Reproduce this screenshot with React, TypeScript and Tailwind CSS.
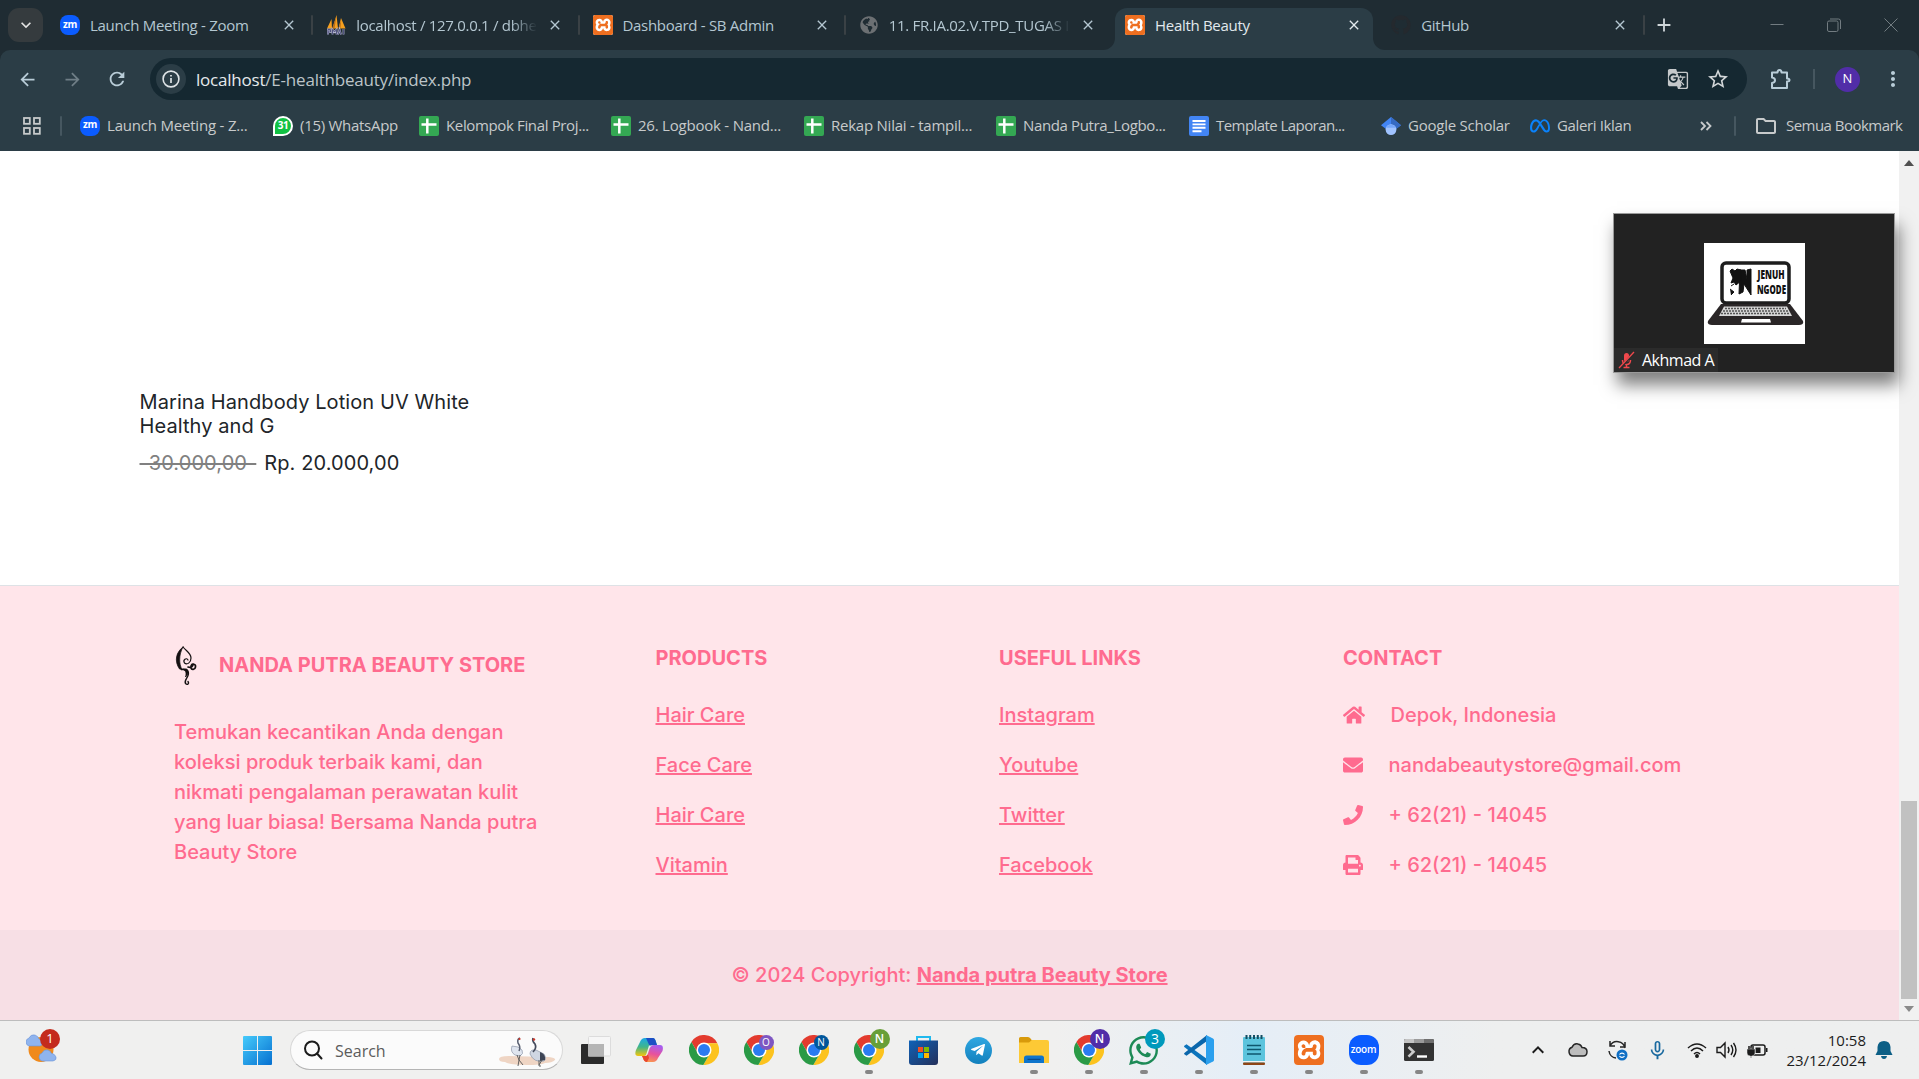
import type { ReactNode } from "react";
import {
  MdArrowBack, MdArrowForward, MdRefresh, MdStarBorder, MdMoreVert,
  MdGTranslate, MdOutlineFolder, MdClose, MdAdd, MdMicNone, MdKeyboardArrowUp, MdKeyboardArrowDown,
} from "react-icons/md";
import { FaHome, FaEnvelope, FaPhone, FaPrint, FaGithub, FaTelegramPlane, FaWhatsapp, FaGlobeAmericas } from "react-icons/fa";
import { FaMeta } from "react-icons/fa6";
import { SiXampp } from "react-icons/si";

const ZoomMark = () => (
  <span className="flex size-5 items-center justify-center rounded-[8px] bg-[#0b5cff] text-[10px] font-bold tracking-tight text-white">
    <span className="-mt-0.5">zm</span>
  </span>
);

const XamppMark = ({ big = false }: { big?: boolean }) => (
  <span className={big ? "flex size-[30px] overflow-hidden rounded-[4px] bg-white" : "flex size-5 overflow-hidden rounded-[2px] bg-white"}>
    <SiXampp className="size-full scale-[1.03] text-[#ee6f20]" />
  </span>
);

const PhpMyAdminMark = () => (
  <svg viewBox="0 0 20 20" className="size-5">
    <path d="M1 13.500 L5.500 4 L6 13.500 Z M6.500 13.500 L10.500 0 L12 13.500 Z M12.500 13.500 L15 3 L19.500 13.500 Z" fill="#f6a01f" />
    <path d="M6 13.500 L10.500 1 L8.500 13.500 Z M12.500 13 L15.200 5 L14.500 13 Z" fill="#b76f1c" />
    <path d="M2 19.500v-5h2.500v2.500H2M6.500 19.500v-5l2 2.500 2-2.500v5M12 19.500l1.500-5 1.500 5M17.500 14v5.500" stroke="#b4b6d0" strokeWidth="1.800" fill="none" />
    <path d="M2 19.500v-5h2.500v2.500H2M6.500 19.500v-5l2 2.500 2-2.500v5M12 19.500l1.500-5 1.500 5M17.500 14v5.500" stroke="#474a78" strokeWidth="0.900" fill="none" />
  </svg>
);

const SheetMark = () => (
  <svg viewBox="0 0 20 20" className="size-5">
    <rect width="20" height="20" rx="2" fill="#34a853" />
    <path d="M8.300 2.500v15M2.500 8.500h15" stroke="#fff" strokeWidth="2.500" />
  </svg>
);

const DocMark = () => (
  <svg viewBox="0 0 20 20" className="size-5">
    <rect width="20" height="20" rx="2" fill="#4285f4" />
    <path d="M3.500 5h13M3.500 8.400h13M3.500 11.800h13M3.500 15.200h9" stroke="#fff" strokeWidth="1.900" />
  </svg>
);

const ScholarMark = () => (
  <svg viewBox="0 0 20 20" className="size-5">
    <path d="M10 1 L0 9.300 L5 13 h10 L20 9.300 Z" fill="#4285f4" />
    <path d="M10 1 L20 9.300 L15 13 L10 8 Z" fill="#356ac3" />
    <circle cx="10" cy="13.600" r="5.400" fill="#a0c3ff" />
    <path d="M5 11.800a5.600 5.600 0 0 1 10 0Z" fill="#76a7fa" />
  </svg>
);

const WhatsMark = () => (
  <span className="flex size-5 items-center justify-center rounded-full rounded-bl-[3px] border-2 border-white bg-[#12c143] text-[10px] font-bold text-white">31</span>
);

type TabInfo = { icon: ReactNode; label: string; sep?: boolean; active?: boolean; fade?: boolean };
const tabs: TabInfo[] = [
  { icon: <ZoomMark />, label: "Launch Meeting - Zoom", sep: true },
  { icon: <PhpMyAdminMark />, label: "localhost / 127.0.0.1 / dbhe", sep: true, fade: true },
  { icon: <XamppMark />, label: "Dashboard - SB Admin", sep: true },
  { icon: <FaGlobeAmericas className="size-[18px] text-[#6c7073]" />, label: "11. FR.IA.02.V.TPD_TUGAS I", fade: true },
  { icon: <XamppMark />, label: "Health Beauty", active: true },
  { icon: <FaGithub className="size-5 text-[#24292e]" />, label: "GitHub", sep: true },
];

function Tab({ icon, label, sep, active, fade }: TabInfo) {
  return (
    <div className="relative flex h-[42px] w-[266.25px] shrink-0 items-center">
      <div className={`relative mx-1 flex h-full w-full items-center pb-[8px] pl-[10px] ${active ? "rounded-t-xl bg-[#2b3d46] text-[#e2e9ed]" : "text-[#b4c7d1]"}`}>
        {active && (
          <>
            <span className="absolute -left-3 bottom-0 size-3 bg-[#2b3d46]"><span className="block size-full rounded-br-xl bg-[#1f2c33]" /></span>
            <span className="absolute -right-3 bottom-0 size-3 bg-[#2b3d46]"><span className="block size-full rounded-bl-xl bg-[#1f2c33]" /></span>
          </>
        )}
        <span className="flex w-5 shrink-0 justify-center">{icon}</span>
        <span className={`ml-[10px] w-[181px] text-[15px] tracking-[-0.3px] whitespace-nowrap ${fade ? "[mask-image:linear-gradient(to_right,#000_155px,transparent_181px)]" : ""}`}>{label}</span>
        <MdClose className="ml-[10px] size-4 shrink-0" />
      </div>
      {sep && <span className="absolute -right-px top-[7px] h-5 w-[2px] rounded bg-[#3a4145]" />}
    </div>
  );
}

const bookmarks: { icon: ReactNode; label: string; w: string; t?: string }[] = [
  { icon: <ZoomMark />, label: "Launch Meeting - Z...", w: "w-[193px]", t: "tracking-[-0.2px]" },
  { icon: <WhatsMark />, label: "(15) WhatsApp", w: "w-[146px]", t: "tracking-[-0.28px]" },
  { icon: <SheetMark />, label: "Kelompok Final Proj...", w: "w-[192px]" },
  { icon: <SheetMark />, label: "26. Logbook - Nand...", w: "w-[193px]", t: "tracking-[-0.22px]" },
  { icon: <SheetMark />, label: "Rekap Nilai - tampil...", w: "w-[192px]", t: "tracking-[-0.24px]" },
  { icon: <SheetMark />, label: "Nanda Putra_Logbo...", w: "w-[193px]" },
  { icon: <DocMark />, label: "Template Laporan...", w: "w-[192px]", t: "tracking-[-0.56px]" },
  { icon: <ScholarMark />, label: "Google Scholar", w: "w-[149px]", t: "tracking-[-0.24px]" },
  { icon: <FaMeta className="size-5 text-[#0a82fb]" />, label: "Galeri Iklan", w: "w-[168px]" },
];

function Browser() {
  return (
    <header className="bg-[#1f2c33]">
      <div className="flex h-[50px] pt-2">
        <div className="ml-2 mr-[3px] flex h-[34px] w-[35px] items-center justify-center rounded-[11px] bg-[#353b3e] text-[#e3e3e3]">
          <MdKeyboardArrowDown className="size-5" />
        </div>
        {tabs.map((t) => <Tab key={t.label} {...t} />)}
        <MdAdd className="ml-[9px] mt-[6px] size-[22px] text-[#cfd6d9]" />
        <div className="ml-auto mr-[21px] mt-[10px] flex items-start gap-[43px] text-[#727c81]">
          <svg viewBox="0 0 14 14" className="size-[14px]"><path d="M0.500 6.500h13" stroke="currentColor" /></svg>
          <svg viewBox="0 0 14 14" className="size-[14px]" fill="none" stroke="currentColor"><rect x="0.500" y="3" width="10.500" height="10.500" rx="1.500" /><path d="M3 1h8.500q2 0 2 2v8" /></svg>
          <svg viewBox="0 0 14 14" className="size-[14px]"><path d="M0.500 0.500l13 13M13.500 0.500l-13 13" stroke="currentColor" /></svg>
        </div>
      </div>
      <div className="h-[101px] rounded-t-[10px] bg-[#2b3d46]">
        <div className="flex h-[50px] items-center pt-2">
          <MdArrowBack className="ml-[17px] size-[21px] text-[#b9cdd8]" />
          <MdArrowForward className="ml-[24px] size-[21px] text-[#6f7e86]" />
          <MdRefresh className="ml-[23px] size-[22px] text-[#b9cdd8]" />
          <div className="ml-[22px] flex h-[42px] w-[1597px] items-center rounded-full bg-[#152831] pl-[6px]">
            <span className="flex size-[30px] items-center justify-center rounded-full bg-[#2b3d46]">
              <svg viewBox="0 0 18 18" className="size-[18px]" fill="none" stroke="#dfe4e7"><circle cx="9" cy="9" r="7.900" strokeWidth="1.600" /><path d="M9 8v5M9 5v1.600" strokeWidth="1.700" /></svg>
            </span>
            <span className="mt-px ml-[10px] text-[17px] tracking-[-0.21px] text-[#bcc4c8]"><span className="text-[#e6eaec]">localhost</span>/E-healthbeauty/index.php</span>
            <MdGTranslate className="ml-auto size-[22px] text-[#c4c8ca]" />
            <MdStarBorder className="ml-[17px] mr-[17px] size-[24px] text-[#d3d7d9]" />
          </div>
          <svg viewBox="0 0 22 22" className="ml-[23px] size-[22px]" fill="none" stroke="#b9cdd8" strokeWidth="2"><path d="M2 4.500h5.500q0-2.500 2-2.500t2 2.500H17v6q2.500 0 2.500 1.500T17 13.500V20H2v-5q3-.5 3-2.800T2 9.500Z" strokeLinejoin="round" /></svg>
          <span className="ml-[21px] h-5 w-[2px] bg-[#465760]" />
          <span className="ml-[20px] flex size-[25px] items-center justify-center rounded-full bg-[#512da8] text-[13px] text-white">N</span>
          <MdMoreVert className="ml-[21px] size-6 text-[#b9cdd8]" />
        </div>
        <div className="flex h-[51px] items-center text-[15px] tracking-[-0.36px] text-[#c7cacb]">
          <svg viewBox="0 0 18 18" className="ml-[23px] size-[18px]" fill="none" stroke="#c7cacb" strokeWidth="1.800"><rect x="1" y="1" width="5.800" height="5.800" /><rect x="11" y="1" width="5.800" height="5.800" /><rect x="1" y="11" width="5.800" height="5.800" /><rect x="11" y="11" width="5.800" height="5.800" /></svg>
          <span className="ml-[19px] mr-[18px] h-5 w-[2px] rounded bg-[#465760]" />
          {bookmarks.map((b) => (
            <div key={b.label} className={`flex shrink-0 items-center gap-[7px] whitespace-nowrap ${b.w}`}>
              <span className="flex size-5 shrink-0 items-center">{b.icon}</span><span className={b.t}>{b.label}</span>
            </div>
          ))}
          <svg viewBox="0 0 12 10" className="ml-[2px] h-[10px] w-3" fill="none" stroke="#c7cacb" strokeWidth="1.800"><path d="M1 1l4 4-4 4M6.500 1l4 4-4 4" /></svg>
          <span className="ml-[22px] h-5 w-[2px] rounded bg-[#465760]" />
          <MdOutlineFolder className="ml-[18px] size-[24px]" />
          <span className="ml-[8px] tracking-[-0.53px] whitespace-nowrap">Semua Bookmark</span>
        </div>
      </div>
    </header>
  );
}

const StoreLogo = () => (
  <svg viewBox="0 0 25 40" className="h-10 w-[25px]" fill="none" stroke="#141011" strokeLinecap="round">
    <path d="M9 1C2 6 0 15 5.500 23l2.500.5C5 18 4.500 9 9 1Z" fill="#141011" strokeWidth="0.700" />
    <path d="M9 1c3 4 8 6 8 11 0 5-4 7-6.500 5-2-3 2-6 3.500-3" strokeWidth="1.200" />
    <path d="M14 21c3 1 5 0 5-3M17 20c1-3 5-2 4.500 1-.5 3-4 3-4.500 1" strokeWidth="1.700" />
    <path d="M7.500 23.500c5-1 8 2 6.500 6-1 3-4 5-2.500 8 2 2 4 0 2.500-2" strokeWidth="1.400" />
    <path d="M7.500 23.500c4 0 5.500 3 4 7.500 2.500-2 4-7 1-8Z" fill="#141011" strokeWidth="0.800" />
  </svg>
);

const contacts = [
  { icon: <FaHome className="h-[20px] w-[22px]" />, text: "Depok, Indonesia" },
  { icon: <FaEnvelope className="size-5" />, text: "nandabeautystore@gmail.com" },
  { icon: <FaPhone className="size-5" />, text: "+ 62(21) - 14045" },
  { icon: <FaPrint className="size-5" />, text: "+ 62(21) - 14045" },
];

function LinkColumn({ title, links }: { title: string; links: string[] }) {
  return (
    <div>
      <h6 className="mb-[27px] font-bold">{title}</h6>
      <ul className="space-y-5">{links.map((l, i) => <li key={i}><a className="underline">{l}</a></li>)}</ul>
    </div>
  );
}

function Footer() {
  return (
    <footer className="border-t border-[#dee2e6] bg-[#ffe5ea] font-[Inter,sans-serif] text-[20px] leading-[30px] font-medium text-[#ff6b8f]">
      <div className="grid h-[344px] grid-cols-[481.5px_343.5px_344px_1fr] pt-[57px] pl-[174px]">
        <div>
          <div className="flex h-[45px] items-center gap-5 font-bold"><StoreLogo /><span className="-mt-[2px]">NANDA PUTRA BEAUTY STORE</span></div>
          <p className="mt-[29px] w-[370px]">Temukan kecantikan Anda dengan koleksi produk terbaik kami, dan nikmati pengalaman perawatan kulit yang luar biasa! Bersama Nanda putra Beauty Store</p>
        </div>
        <LinkColumn title="PRODUCTS" links={["Hair Care", "Face Care", "Hair Care", "Vitamin"]} />
        <LinkColumn title="USEFUL LINKS" links={["Instagram", "Youtube", "Twitter", "Facebook"]} />
        <div>
          <h6 className="mb-[27px] font-bold">CONTACT</h6>
          <ul className="space-y-5">
            {contacts.map((c, i) => <li key={i} className="flex items-center gap-[25.5px]">{c.icon}<span>{c.text}</span></li>)}
          </ul>
        </div>
      </div>
      <div className="flex h-[90px] items-center justify-center bg-[#f7dfe5]">
        <span>© 2024 Copyright: <a className="font-bold underline">Nanda putra Beauty Store</a></span>
      </div>
    </footer>
  );
}

function MeetingPreview() {
  return (
    <div className="absolute top-[62px] right-[24px] flex h-[160px] w-[282px] items-end border border-[#9a9a9a] bg-[#222] shadow-[4px_12px_16px_rgba(0,0,0,0.5)]">
      <div className="absolute top-[29px] left-[90px] size-[101px] bg-white">
        <svg viewBox="0 0 101 101" className="size-full">
          <rect x="18" y="20" width="67" height="40" rx="4" fill="#fff" stroke="#1d1d1d" strokeWidth="3.500" />
          <path d="M17 61h69l13 17q1 4-4 4H8q-5 0-4-4Z" fill="#2a2627" />
          <path d="M20 63.500h63l5 9.500H15Z" fill="#d6d6d6" />
          <path d="M21 65.500h61M19 68h65M17 70.500h69" stroke="#555" strokeWidth="1.500" strokeDasharray="2 1" />
          <path d="M38 76h28l1 3.500H37Z" fill="#fff" />
          <path d="M26 28l2-2 3 2 2-2 4 1v11l-5 4-2-3-3 1 2-5ZM27 43l3-2M26 46l4 3-3 3M35 51l1-24 5 0 2 9V27l4-1v26l-7-11-1 8Z" fill="#111" stroke="#111" strokeWidth="1" />
          <text x="53.500" y="35.500" fontSize="13" fontWeight="800" fontFamily="Open Sans, sans-serif" textLength="27" lengthAdjust="spacingAndGlyphs" fill="#111">JENUH</text>
          <text x="53" y="51" fontSize="13" fontWeight="800" fontFamily="Open Sans, sans-serif" textLength="29" lengthAdjust="spacingAndGlyphs" fill="#111">NGODE</text>
        </svg>
      </div>
      <div className="flex h-[24px] w-[104px] items-center bg-[#2b2b2b] pl-1 text-[16px] tracking-[-0.5px] whitespace-nowrap text-white">
        <svg viewBox="0 0 17 18" className="h-[18px] w-[17px]" stroke="#f0484c" fill="#f0484c"><rect x="6" y="2" width="5" height="9" rx="2.500" stroke="none" /><path d="M4.500 9q0 4.500 4 4.500t4-4.500M8.500 13.500V16M5.500 16.500h6" fill="none" strokeWidth="1.500" /><path d="M16 1.500L2.500 17" stroke="#2b2b2b" strokeWidth="2.500" /><path d="M16 1L1 17" strokeWidth="1.300" /></svg>
        <span className="ml-[7px]">Akhmad A</span>
      </div>
    </div>
  );
}

function Page() {
  return (
    <main className="relative flex h-[869px] bg-white">
      <div className="w-[1899px]">
        <section className="h-[434px] pt-[239px] pl-[139.500px] font-[Inter,sans-serif] text-[20px] tracking-[0.09px] text-[#212529]">
          <h6 className="w-[345px] leading-6">Marina Handbody Lotion UV White Healthy and G</h6>
          <div className="mt-[10px] flex leading-[30px]">
            <span className="whitespace-pre text-[#808080] line-through [word-spacing:3.500px]">{"\u00a030.000,00\u00a0"}</span>
            <span className="ml-2">Rp. 20.000,00</span>
          </div>
        </section>
        <Footer />
      </div>
      <div className="flex w-5 flex-col items-center bg-[#f1f1f1]">
        <svg viewBox="0 0 10 6" className="mt-[9px] h-[6px] w-[10px]"><path d="M0 6L5 0l5 6Z" fill="#505050" /></svg>
        <span className="mt-[635px] h-[198px] w-4 bg-[#c1c1c1]" />
        <svg viewBox="0 0 10 6" className="mt-[7px] h-[6px] w-[10px]"><path d="M0 0h10L5 6Z" fill="#8a8a8a" /></svg>
      </div>
      <MeetingPreview />
    </main>
  );
}

const Chrome = () => (
  <svg viewBox="0 0 24 24" className="size-[30px]">
    <path d="M1.900 5.510A12 12 0 0 1 22.670 6.500H12L7.240 14.750Z" fill="#e33b2e" />
    <path d="M22.670 6.500A12 12 0 0 1 11.430 24L16.760 14.750 12 6.500Z" fill="#fcc31e" />
    <path d="M11.430 24A12 12 0 0 1 1.900 5.510L7.240 14.750H16.760Z" fill="#2a9a46" />
    <circle cx="12" cy="12" r="6" fill="#fff" /><circle cx="12" cy="12" r="4.800" fill="#2a7bf0" />
  </svg>
);

const Copilot = () => (
  <svg viewBox="0 0 28 26" className="h-[26px] w-7">
    <defs>
      <linearGradient id="cpA" x1="0" y1="0" x2="0" y2="1"><stop offset="0" stopColor="#1ba9e6" /><stop offset="0.500" stopColor="#41b58a" /><stop offset="1" stopColor="#f5c60c" /></linearGradient>
      <linearGradient id="cpB" x1="0.600" y1="0" x2="0.300" y2="1"><stop offset="0" stopColor="#a65df0" /><stop offset="0.500" stopColor="#e8529c" /><stop offset="1" stopColor="#fb9a4b" /></linearGradient>
    </defs>
    <path d="M5 5q1.500-4 5-4h8q2 0 3 4l1 3h-4q-2 0-3 3l-2 6q-1 2-4 2H3q-4 0-2-6Z" fill="url(#cpA)" />
    <path d="M11 1h7q2 0 3 4l1 3h-4q-2 0-3 2Z" fill="#1c4fc4" />
    <path d="M23 21q-1.500 4-5 4h-6q-3 0-4-4l-1-2h3q2 0 3-3l2-6q1-2 4-2h6q4 0 2.500 6Z" fill="url(#cpB)" />
    <path d="M7 19h3q2 0 3-2l1 4-2 4q-3 0-4-4Z" fill="#e8462f" />
    <path d="M14 8.500h3.500q-2 .5-3 3l-2 6-1.500 1.500h-1.500q1.500 0 2-2.500Z" fill="#eee" />
  </svg>
);

const badgeBase = "absolute flex items-center justify-center rounded-full text-white";
function ChromeProfile({ letter, color, large }: { letter: string; color: string; large?: boolean }) {
  return (
    <span className="relative">
      <Chrome />
      <span className={`${badgeBase} ${color} ${large ? "-top-[6px] -right-[6px] size-5 text-[12px] font-semibold text-[#d5dccb]" : "top-0 right-0 size-[15px] text-[10px]"}`}>{letter}</span>
    </span>
  );
}

const apps: { icon: ReactNode; running?: boolean }[] = [
  { icon: <svg viewBox="0 0 30 28" className="ml-1 h-7 w-[30px]"><rect x="0" y="8" width="23" height="20" rx="1" fill="#2b2b2b" /><rect x="7.500" y="0.500" width="22" height="19.500" rx="1" fill="#f6f6f6" stroke="#dcdcdc" /><rect x="7" y="8" width="16" height="12.500" fill="#b5b5b5" /></svg> },
  { icon: <Copilot /> },
  { icon: <Chrome /> },
  { icon: <ChromeProfile letter="O" color="bg-[#7e57c2]" /> },
  { icon: <ChromeProfile letter="N" color="bg-[#01579b]" /> },
  { icon: <ChromeProfile letter="N" color="bg-[#689f38]" large />, running: true },
  { icon: <svg viewBox="0 0 29 29" className="size-[29px]"><defs><linearGradient id="st" x2="1" y2="1"><stop stopColor="#0f62b8" /><stop offset="1" stopColor="#25305a" /></linearGradient></defs><path d="M8 5V1h13v4" fill="none" stroke="#20b9ee" strokeWidth="2" /><path d="M0 4.500h29V26q0 3-3 3H3q-3 0-3-3Z" fill="url(#st)" /><path d="M9 11h5v5H9z" fill="#f25022" /><path d="M15 11h5v5h-5z" fill="#7fba00" /><path d="M9 17h5v5H9z" fill="#00a4ef" /><path d="M15 17h5v5h-5z" fill="#ffb900" /></svg> },
  { icon: <span className="flex size-[27px] items-center justify-center rounded-full bg-linear-to-b from-[#2fa8e2] to-[#1380bd]"><FaTelegramPlane className="-ml-[2px] size-4 text-white" /></span> },
  { icon: <svg viewBox="0 0 30 26" className="h-[26px] w-[30px]"><path d="M0 1.500Q0 0 1.500 0H9q1.500 0 2.500 1.500L13 3.500v4H0Z" fill="#d89a0b" /><path d="M0 5.500h10l3-2.500h15q2 0 2 2v21H0Z" fill="#fdc935" /><path d="M5 26v-5q0-2.500 2.500-2.500h15Q25 18.500 25 21v5Z" fill="#0f75cc" /><path d="M8.500 22.300h13" stroke="#07427c" /></svg>, running: true },
  { icon: <ChromeProfile letter="N" color="bg-[#512da8]" large />, running: true },
  { icon: <span className="relative"><FaWhatsapp className="size-[33px] text-[#1c8a56]" /><span className={`${badgeBase} -top-[5px] -right-[5px] size-5 bg-[#0099bc] text-[14px]`}>3</span></span>, running: true },
  { icon: <svg viewBox="0 0 30 30" className="size-[30px]"><path d="M0 11l2.500-1.800L23 24v6L1 12.500Q0 12 0 11Z" fill="#0b74bd" /><path d="M0 19l2.500 1.800L23 6V0L1 17.500Q0 18 0 19Z" fill="#0a66ab" /><path d="M22 0l7 3.500q1 .5 1 1.500v20q0 1-1 1.500L22 30Z" fill="#2ba0ee" /></svg>, running: true },
  { icon: <svg viewBox="0 0 22 30" className="h-[30px] w-[22px]"><rect y="2" width="22" height="26" rx="1" fill="#5cc4dd" /><rect y="26" width="22" height="1.500" fill="#f3f3f3" /><rect y="27.500" width="22" height="2.500" rx="1" fill="#8d4516" /><path d="M4 10.500h14M4 14.500h14M4 19h14" stroke="#0e566e" strokeWidth="1.500" /><path d="M3.500 0v4M7.200 0v4M11 0v4M14.800 0v4M18.500 0v4" stroke="#134e63" strokeWidth="2" /></svg>, running: true },
  { icon: <XamppMark big />, running: true },
  { icon: <span className="flex size-[30px] items-center justify-center rounded-[12px] bg-[#0b5cff] text-[10px] font-semibold tracking-tight text-white"><span className="-mt-0.5">zoom</span></span>, running: true },
  { icon: <svg viewBox="0 0 30 22" className="h-[22px] w-[30px]"><rect width="30" height="22" rx="1.500" fill="#333" /><path d="M0 4V1.500Q0 0 1.500 0H10v4Z" fill="#c4c4c4" /><path d="M10 0h10v4H10Z" fill="#9b9b9b" /><path d="M20 0h8.500Q30 0 30 1.500V4H20Z" fill="#6f6f6f" /><path d="M4.500 8l5 4.800-5 4.800" fill="none" stroke="#ccc" strokeWidth="2.600" /><path d="M13 17.500h10" stroke="#fff" strokeWidth="2.400" /></svg>, running: true },
];

const Cranes = () => (
  <svg viewBox="0 0 60 32" className="h-8 w-[60px]">
    <path d="M2 24q0-3 10-3l40 1q7 1 6 3-3 3-10 3-4 2-18 2-18 0-22-3-6 0-6-3Z" fill="#efd5c4" />
    <path d="M15 11q7 0 10 4 2 4-2 6l-5-1q-5-3-3-9Z" fill="#dfe5ef" stroke="#8e97a8" strokeWidth="0.700" />
    <path d="M22 16q2-4-1-8-1-4 2-5" fill="none" stroke="#585f70" strokeWidth="1.500" />
    <path d="M20 20l2 5-1 6M23 20l-1 5 4 5" fill="none" stroke="#555" strokeWidth="0.900" />
    <path d="M33 19q0-5 6-4l8 4q3 5 0 7-10 2-14-7Z" fill="#cfd6e2" stroke="#8e97a8" strokeWidth="0.700" />
    <path d="M43 17q6 2 5 8l-5 1Z" fill="#3d4455" />
    <path d="M36 17q4-4 2-8-3-3-2-6" fill="none" stroke="#444b5c" strokeWidth="1.700" />
    <path d="M42 25v6h2M45 25l-3 5" fill="none" stroke="#555" strokeWidth="0.900" />
    <circle cx="22.500" cy="4" r="1.100" fill="#cf3528" /><circle cx="37" cy="4.500" r="1.200" fill="#cf3528" />
  </svg>
);

function Taskbar() {
  return (
    <div className="flex h-[59px] items-start border-t border-[#bdbdbd] bg-linear-to-r from-[#f0f0ef] from-55% via-[#e5eef7] via-65% to-[#eeefef] to-78% text-[#1c1c1c]">
      <div className="relative mt-[7px] ml-[26px] h-9 w-[34px]">
        <svg viewBox="0 0 34 36" className="h-9 w-[34px]">
          <circle cx="15" cy="21.500" r="12.500" fill="#f08a1c" />
          <path d="M3 18q-3-1-3-4t3-4q2-4 6-3 3 1 4 4 3 1 3 4t-2 3Z" fill="#8fb4ee" stroke="#6b93d6" strokeWidth="0.600" />
          <path d="M16 33q-3-1-3-4t3-4q2-4 6-3 3 1 3 3 4 1 5 4t-3 4Z" fill="#8fb4ee" stroke="#6b93d6" strokeWidth="0.600" />
        </svg>
        <span className="absolute top-[1px] right-0 flex size-5 items-center justify-center rounded-full bg-[#c42b1c] text-[13px] text-white">1</span>
      </div>
      <svg viewBox="0 0 29 29" className="mt-[15px] ml-[183px] size-[29px]">
        <defs><linearGradient id="wn" x2="1" y2="1"><stop stopColor="#46cbfb" /><stop offset="1" stopColor="#0670d0" /></linearGradient></defs>
        <path d="M0 1q0-1 1-1h13v14H0ZM15 0h13q1 0 1 1v13H15ZM0 15h14v14H1q-1 0-1-1ZM15 15h14v13q0 1-1 1H15Z" fill="url(#wn)" />
      </svg>
      <div className="mt-[9px] ml-[18px] mr-[3px] flex h-[40px] w-[273px] items-center rounded-full border border-[#d8d8d8] border-b-[#b5b5b5] bg-[#fbfbfb] pl-[12px]">
        <svg viewBox="0 0 20 20" className="size-5" fill="none" stroke="#1b1b1b" strokeWidth="2"><circle cx="9" cy="8.500" r="7" /><path d="M14 13.500l4.500 5" strokeLinecap="round" /></svg>
        <span className="mt-px ml-[12px] text-[16px] text-[#5c5c5c]">Search</span>
        <span className="mt-[2px] mr-[5px] ml-auto"><Cranes /></span>
      </div>
      {apps.map((a, i) => (
        <div key={i} className="flex h-full w-[55px] shrink-0 flex-col items-center">
          <span className="flex h-[30px] items-center mt-[14px]">{a.icon}</span>
          {a.running && <span className="mt-[5px] h-1 w-2 rounded-full bg-[#868686]" />}
        </div>
      ))}
      <div className="flex h-[58px] items-center">
        <MdKeyboardArrowUp className="ml-[80px] size-6" />
        <svg viewBox="0 0 22 16" className="ml-[17px] h-4 w-[22px]"><path d="M6 14a4.500 4.500 0 0 1-1-8.700Q7 1 11 2q3 .6 4 3.500 5 0 5 4.300T16 14Z" fill="#bdbdbd" stroke="#262626" strokeWidth="1.500" /></svg>
        <svg viewBox="0 0 24 24" className="ml-[16px] size-6" fill="none" stroke="#262626" strokeWidth="1.500"><path d="M20 10a8 8 0 0 0-15-2M5 3v5h5M4 13a8 8 0 0 0 7 7M20 4v5h-5" /><circle cx="17" cy="17" r="5.500" fill="#0f6fc5" stroke="none" /><path d="M14.500 16.500a3 3 0 0 1 5 0M19.500 18a3 3 0 0 1-5 0" stroke="#fff" strokeWidth="1.100" /></svg>
        <MdMicNone className="ml-[17px] size-[23px] text-[#19699f]" />
        <svg viewBox="0 0 20 16" className="ml-[18px] h-4 w-5" fill="none" stroke="#1b1b1b" strokeWidth="1.500"><path d="M1 6q9-8 18 0M4 9q6-6 12 0M7 12q3-3 6 0" /><circle cx="10" cy="14" r="1.200" fill="#1b1b1b" /></svg>
        <svg viewBox="0 0 21 18" className="ml-[9px] h-[18px] w-[21px]" fill="none" stroke="#1b1b1b" strokeWidth="1.400"><path d="M1 6.500h3.500L9 2v14l-4.500-4.500H1ZM12 6q2 3 0 6M15 4q3.500 5 0 10" /><path d="M17.500 2q5 7 0 14" /></svg>
        <svg viewBox="0 0 22 18" className="ml-[9px] h-[18px] w-[22px]"><rect x="5" y="4" width="14" height="10" rx="2" fill="none" stroke="#1b1b1b" strokeWidth="1.500" /><path d="M9.500 6.500h5V12h-5ZM20 7h1.500v4H20Z" fill="#1b1b1b" /><path d="M1 8h8v4q0 3-3.500 3v2h-1v-2Q1 15 1 12ZM2.500 5v3M7 5v3" fill="#1b1b1b" stroke="#eee" strokeWidth="0.500" /><path d="M3 5v3M7 5v3" stroke="#1b1b1b" strokeWidth="1.500" /></svg>
        <div className="ml-[18px] w-[80px] text-right text-[15px] leading-5">10:58<br />23/12/2024</div>
        <svg viewBox="0 0 18 20" className="ml-[9px] h-5 w-[18px]" fill="#0c5f86"><path d="M9 1q6 0 6.500 6v4l2 4H.5l2-4V7Q3 1 9 1ZM6 16h6q-.5 3-3 3t-3-3Z" /></svg>
      </div>
    </div>
  );
}

export default function App() {
  return (
    <div className="h-[1079px] w-[1919px] overflow-hidden font-['Open_Sans','Noto_Sans',sans-serif]">
      <Browser />
      <Page />
      <Taskbar />
    </div>
  );
}
